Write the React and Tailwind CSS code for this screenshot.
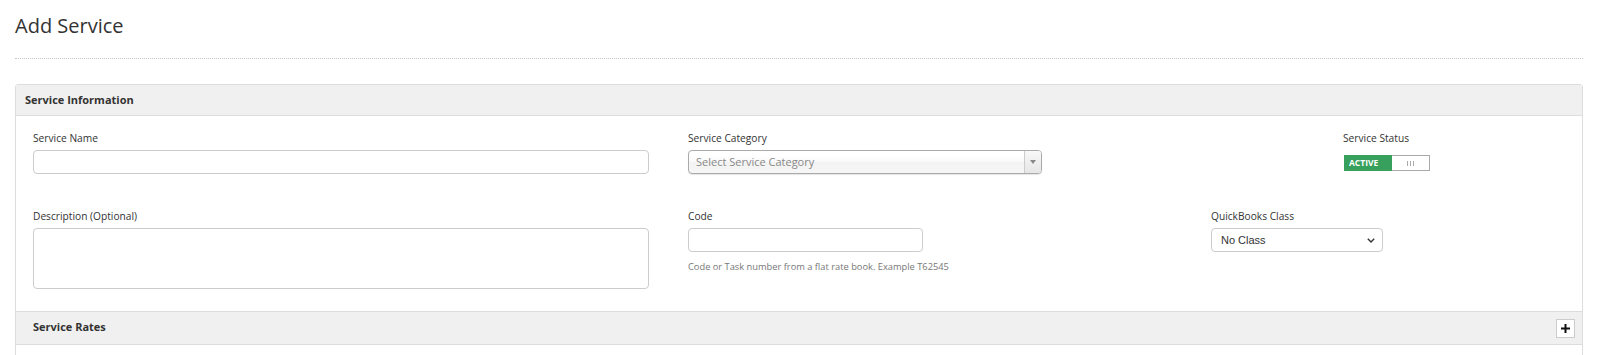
export default function App() {
  return (
    <div className="font-['Open_Sans',sans-serif] text-[#333] bg-white pl-[15px] pr-[17px] min-h-[355px]">
      <h1 className="pt-[12px] text-[20px] leading-[28px] font-normal text-[#333]">Add Service</h1>
      <div className="mt-[18px] border-t border-dotted border-[#c4c4c4]" />

      <div className="mt-[25px] border border-[#ddd] rounded-t-[3px]">
        <div className="h-[31px] bg-[#f0f0f0] border-b border-[#ddd] pl-[9px] flex items-center text-[11px] font-bold">
          Service Information
        </div>

        <div className="pl-[17px] pt-[15px] pb-[22px]">
          {/* Row 1 */}
          <div className="flex">
            <div className="w-[616px] shrink-0">
              <label className="block text-[10.2px] leading-[14px] mb-[5px]">Service Name</label>
              <input className="block w-full h-[24px] border border-[#ccc] rounded-[4px] bg-white" />
            </div>
            <div className="ml-[39px] w-[655px] shrink-0">
              <label className="block text-[10.2px] leading-[14px] mb-[5px]">Service Category</label>
              <div className="flex w-[354px] h-[24px] border border-[#aaa] rounded-[4px] overflow-hidden bg-[linear-gradient(#fff_20%,#f9f9f9_50%,#f3f3f3_52%,#f6f6f6_100%)] shadow-[0_1px_1px_rgba(0,0,0,0.1)]">
                <div className="flex-1 flex items-center pl-[7px] text-[11px] text-[#888]">Select Service Category</div>
                <div className="w-[17px] border-l border-[#ccc] flex items-center justify-center bg-[linear-gradient(#f8f8f8,#e6e6e6)]">
                  <svg width="6" height="4" viewBox="0 0 6 4">
                    <path d="M0 0 L6 0 L3 4 Z" fill="#888" />
                  </svg>
                </div>
              </div>
            </div>
            <div>
              <label className="block text-[10.2px] leading-[14px]">Service Status</label>
              <div className="mt-[10px] ml-px flex h-[16px] w-[86px]">
                <div className="w-[48px] bg-[#37a05c] text-white text-[8.5px] font-bold flex items-center pl-[5px]">
                  ACTIVE
                </div>
                <div className="flex-1 bg-white border border-l-0 border-[#aaa] flex items-center justify-center">
                  <div className="flex gap-[2px]">
                    <span className="block w-px h-[5px] bg-[#aaa]" />
                    <span className="block w-px h-[5px] bg-[#aaa]" />
                    <span className="block w-px h-[5px] bg-[#aaa]" />
                  </div>
                </div>
              </div>
            </div>
          </div>

          {/* Row 2 */}
          <div className="flex mt-[35px]">
            <div className="w-[616px] shrink-0">
              <label className="block text-[10.2px] leading-[14px] mb-[5px]">Description (Optional)</label>
              <textarea className="block w-full h-[61px] border border-[#ccc] rounded-[4px] bg-white resize-none" />
            </div>
            <div className="ml-[39px] w-[523px] shrink-0">
              <label className="block text-[10.2px] leading-[14px] mb-[5px]">Code</label>
              <input className="block w-[235px] h-[24px] border border-[#ccc] rounded-[4px] bg-white" />
              <p className="mt-[9px] text-[9.3px] leading-[12px] text-[#777]">
                Code or Task number from a flat rate book. Example T62545
              </p>
            </div>
            <div>
              <label className="block text-[10.2px] leading-[14px] mb-[5px]">QuickBooks Class</label>
              <div className="w-[172px] h-[24px] border border-[#ccc] rounded-[4px] bg-white flex items-center justify-between pl-[9px] pr-[7px] font-['Liberation_Sans',Arial,sans-serif] text-[11px] text-[#333]">
                <span>No Class</span>
                <svg width="8" height="5" viewBox="0 0 8 5" fill="none">
                  <path d="M0.8 0.8 L4 4 L7.2 0.8" stroke="#333" strokeWidth="1.4" />
                </svg>
              </div>
            </div>
          </div>
        </div>

        <div className="h-[34px] bg-[#f0f0f0] border-y border-[#ddd] flex items-center justify-between pl-[17px] pr-[7px]">
          <span className="text-[11px] font-bold leading-[14px] -mt-[2px]">Service Rates</span>
          <button className="w-[19px] h-[19px] border border-[#ccc] bg-white flex items-center justify-center">
            <svg width="9" height="9" viewBox="0 0 9 9">
              <rect x="3.5" y="0" width="2" height="9" fill="#111" />
              <rect x="0" y="3.5" width="9" height="2" fill="#111" />
            </svg>
          </button>
        </div>
        <div className="h-[20px]" />
      </div>
    </div>
  );
}
